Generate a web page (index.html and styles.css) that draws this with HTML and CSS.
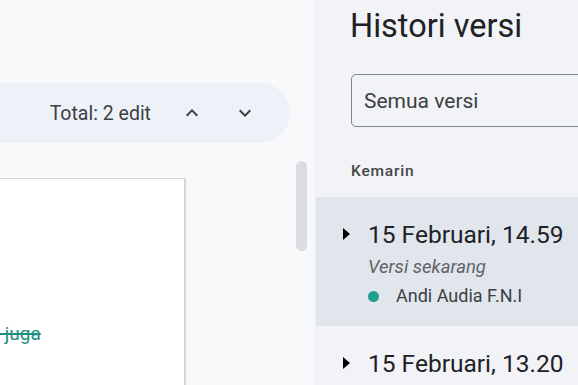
FILE: index.html
```html
<!DOCTYPE html>
<html lang="id">
<head>
<meta charset="utf-8">
<title>Histori versi</title>
<link rel="stylesheet" href="styles.css">
</head>
<body>
<div class="app">
  <main class="editor">
    <div class="changes-bar">
      <span class="total">Total: 2 edit</span>
      <button class="nav-btn" aria-label="Sebelumnya">
        <svg width="24" height="24" viewBox="0 0 24 24"><path d="M7.4 15.4 12 10.8l4.6 4.6L18 14l-6-6-6 6z" fill="#3c4043"/></svg>
      </button>
      <button class="nav-btn" aria-label="Berikutnya">
        <svg width="24" height="24" viewBox="0 0 24 24"><path d="M7.4 8.6 12 13.2l4.6-4.6L18 10l-6 6-6-6z" fill="#3c4043"/></svg>
      </button>
    </div>
    <div class="doc-area">
      <div class="page">
        <p class="line"><span class="deleted">&nbsp;juga</span></p>
      </div>
      <div class="scrollbar"></div>
    </div>
  </main>
  <aside class="history">
    <h1 class="title">Histori versi</h1>
    <div class="select">Semua versi</div>
    <div class="group-label">Kemarin</div>
    <div class="version selected">
      <div class="version-head">
        <span class="caret"></span>
        <span class="date">15 Februari, 14.59</span>
      </div>
      <div class="current">Versi sekarang</div>
      <div class="author"><span class="dot"></span>Andi Audia F.N.I</div>
    </div>
    <div class="version">
      <div class="version-head">
        <span class="caret"></span>
        <span class="date">15 Februari, 13.20</span>
      </div>
    </div>
  </aside>
</div>
</body>
</html>
```
FILE: styles.css
```css
html, body {
  margin: 0;
  padding: 0;
}
body {
  width: 578px;
  height: 385px;
  overflow: hidden;
  font-family: Roboto, "Liberation Sans", sans-serif;
  color: #202124;
}
.app {
  display: flex;
  height: 385px;
}
.editor {
  width: 315px;
  flex: none;
  background: #f8f9fb;
  padding-top: 83px;
  box-sizing: border-box;
  overflow: hidden;
}
.changes-bar {
  display: flex;
  align-items: center;
  justify-content: flex-end;
  margin-left: -40px;
  width: 330px;
  height: 60px;
  box-sizing: border-box;
  background: #eef1f8;
  border-radius: 0 30px 30px 0;
  padding-right: 33px;
}
.total {
  font-size: 19.5px;
  color: #3c4043;
  margin-right: 29px;
}
.nav-btn {
  width: 24px;
  height: 24px;
  padding: 0;
  border: 0;
  background: none;
  display: flex;
  align-items: center;
  justify-content: center;
}
.nav-btn + .nav-btn {
  margin-left: 29px;
}
.doc-area {
  display: flex;
  align-items: flex-start;
  margin-top: 18px;
}
.page {
  width: 187px;
  height: 300px;
  margin-left: -1px;
  margin-top: 17px;
  background: #fff;
  border: 1px solid #d5d7da;
  border-right-width: 2px;
  box-sizing: border-box;
  padding-top: 144px;
  flex: none;
}
.line {
  margin: 0;
  font-size: 19px;
  line-height: 22px;
}
.deleted {
  color: #1e8f7f;
  text-decoration: line-through;
  text-decoration-thickness: 1.5px;
}
.scrollbar {
  width: 11px;
  height: 90px;
  margin-left: 110px;
  border-radius: 6px;
  background: #dadce0;
}
.history {
  flex: 1;
  background: #f1f3f7;
  border-left: 1px solid #eceef2;
  overflow: hidden;
  display: flex;
  flex-direction: column;
}
.title {
  margin: 5px 0 0 34px;
  font-size: 32.5px;
  font-weight: 400;
  line-height: 42px;
  color: #202124;
  white-space: nowrap;
}
.select {
  margin: 27px 0 0 35px;
  height: 53px;
  width: 260px;
  box-sizing: border-box;
  border: 1px solid #80868b;
  border-radius: 5px;
  padding-left: 12px;
  display: flex;
  align-items: center;
  font-size: 21px;
  color: #3c4043;
}
.group-label {
  margin: 34px 0 0 35px;
  font-size: 15.5px;
  font-weight: 500;
  letter-spacing: 0.8px;
  color: #444746;
  line-height: 20px;
}
.version {
  padding: 22px 0 0 27px;
}
.version.selected {
  margin-top: 16px;
  height: 129px;
  box-sizing: border-box;
  background: #e1e6ed;
  padding-top: 22px;
}
.version-head {
  display: flex;
  align-items: center;
  height: 30px;
}
.caret {
  width: 0;
  height: 0;
  border-top: 6px solid transparent;
  border-bottom: 6px solid transparent;
  border-left: 7px solid #000;
  margin-right: 18px;
}
.date {
  font-size: 24.5px;
  color: #202124;
  white-space: nowrap;
}
.current {
  margin: 6px 0 0 25px;
  font-size: 18.5px;
  font-style: italic;
  color: #5f6368;
  line-height: 24px;
}
.author {
  margin: 5px 0 0 25px;
  display: flex;
  align-items: center;
  font-size: 18px;
  color: #3c4043;
  line-height: 24px;
}
.dot {
  width: 11px;
  height: 11px;
  border-radius: 50%;
  background: #1fa08e;
  margin-right: 17px;
}
```
